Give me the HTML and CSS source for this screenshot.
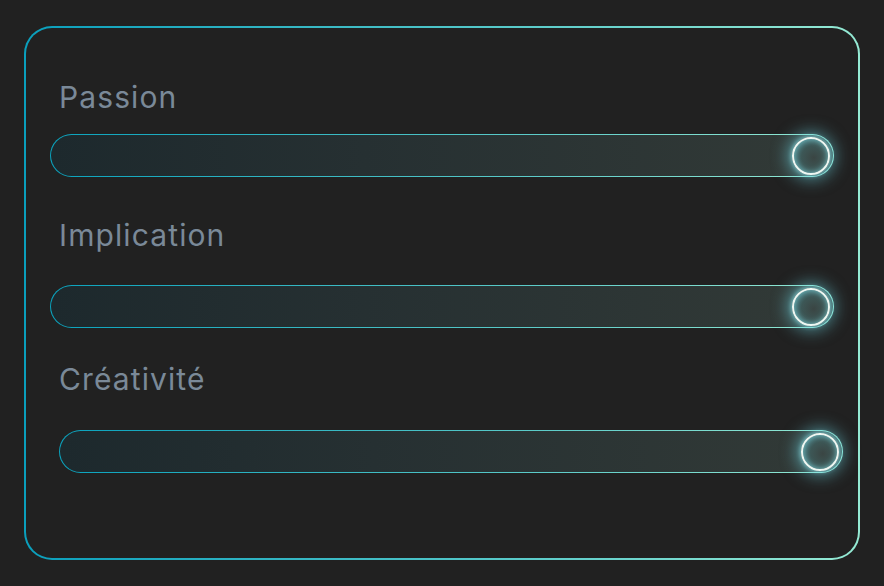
FILE: index.html
```html
<!DOCTYPE html>
<html lang="fr">
<head>
<meta charset="utf-8">
<title>Sliders</title>
<link rel="stylesheet" href="styles.css">
</head>
<body>
<div class="card">
  <div class="field field-first">
    <div class="label">Passion</div>
    <div class="track"><div class="thumb"></div></div>
  </div>
  <div class="field field-second">
    <div class="label">Implication</div>
    <div class="track"><div class="thumb"></div></div>
  </div>
  <div class="field field-third">
    <div class="label">Créativité</div>
    <div class="track track-shifted"><div class="thumb"></div></div>
  </div>
</div>
</body>
</html>
```

FILE: styles.css
```css
html, body {
  margin: 0;
  padding: 0;
  background: #212121;
}
body {
  width: 884px;
  height: 586px;
  padding: 26px 24px;
  box-sizing: border-box;
  font-family: Inter, "Noto Sans", sans-serif;
}
.card {
  width: 836px;
  height: 534px;
  box-sizing: border-box;
  border: 2px solid transparent;
  border-radius: 28px;
  background:
    linear-gradient(#212121, #212121) padding-box,
    linear-gradient(90deg, #0a9fbc 0%, #4cc4c8 50%, #95ead4 100%) border-box;
  padding: 51px 0 0 24px;
  display: flex;
  flex-direction: column;
}
.field {
  display: flex;
  flex-direction: column;
}
.field-second { margin-top: 40px; }
.field-third { margin-top: 33px; }
.label {
  font-size: 30px;
  line-height: 36px;
  letter-spacing: 1.1px;
  color: #7a8998;
  padding-left: 9px;
}
.field-first .track { margin-top: 19px; }
.field-second .track { margin-top: 32px; }
.field-third .track { margin-top: 33px; }
.track {
  width: 784px;
  height: 43px;
  box-sizing: border-box;
  border: 1px solid transparent;
  border-radius: 22px;
  background:
    linear-gradient(90deg, #1d292d 0%, #263032 40%, #323a37 100%) padding-box,
    linear-gradient(90deg, #0aa3be 0%, #4cc3c6 50%, #95ead4 100%) border-box;
  display: flex;
  align-items: center;
  justify-content: flex-end;
  padding-right: 3px;
}
.track-shifted { margin-left: 9px; }
.thumb {
  width: 38px;
  height: 38px;
  box-sizing: border-box;
  border-radius: 50%;
  border: 2px solid #eef8f3;
  background: radial-gradient(circle at 58% 55%, #3a4543 0%, #3d5756 45%, #4b8d96 100%);
  box-shadow: 0 0 16px 5px rgba(110, 215, 228, 0.55), 0 0 4px 1px rgba(170, 240, 240, 0.6), inset 0 0 6px rgba(140, 230, 235, 0.7);
}
```
